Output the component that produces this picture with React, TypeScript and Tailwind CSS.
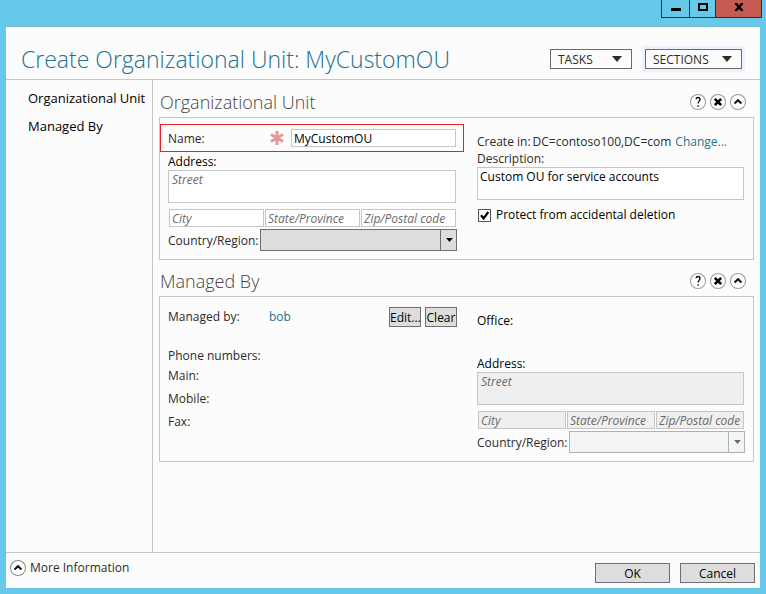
import React, { useState } from "react";

const FIELD =
  "block min-w-0 rounded-none border border-[#c6c6c6] bg-white text-black placeholder:italic placeholder:text-[#6a6a6a] placeholder:opacity-100 outline-none disabled:bg-[#efefef]";
const LINE_FIELD = "h-[18px] pl-0.5 leading-4";
const BUTTON = "h-5 border border-[#707070] bg-[#dddddd] pt-0.5 leading-4 text-black";

function CaretDown({ className }: { className?: string }) {
  return (
    <svg viewBox="0 0 10 6" className={className} fill="currentColor" aria-hidden="true">
      <path d="M0 0h10L5 6z" />
    </svg>
  );
}

function ChevronUp() {
  return (
    <svg viewBox="0 0 16 16" className="size-4" fill="none" stroke="#111" strokeWidth="2" aria-hidden="true">
      <path d="M4.5 9.5 8 6.2l3.5 3.3" />
    </svg>
  );
}

function RoundButton({ label, children }: { label: string; children: React.ReactNode }) {
  return (
    <button
      type="button"
      aria-label={label}
      className="flex size-4 shrink-0 items-center justify-center rounded-full bg-white text-black ring-1 ring-inset ring-[#9a9a9a]"
    >
      {children}
    </button>
  );
}

function MenuButton({ children, focused }: { children: string; focused?: boolean }) {
  return (
    <button
      type="button"
      className={`flex h-5 items-center justify-between border border-[#6a6a6a] bg-[#fcfcfc] px-[7px] text-[#2b2b2b] ${
        focused ? "w-[97px] ring-3 ring-[#edf2ff]" : "w-[82px]"
      }`}
    >
      <span className="pt-0.5 leading-4">{children}</span>
      <CaretDown className="mr-0.5 h-1.5 w-2.5" />
    </button>
  );
}

function Section({ title, children }: { title: string; children: React.ReactNode }) {
  return (
    <section className="pt-[7px]">
      <div className="flex h-[29px] items-center justify-between pr-2 pl-px">
        <h2 className="text-[18px] leading-[29px] font-light text-[#444]">{title}</h2>
        <div className="flex gap-1 pb-0.5">
          <RoundButton label="Help">
            <svg viewBox="0 0 16 16" className="size-4" fill="none" stroke="currentColor" strokeWidth="1.3" aria-hidden="true">
              <path d="M6 5C6.200 4 7 3.500 8 3.500c1.200 0 2 .8 2 1.900C10 7 8.100 7.300 8.100 9.600M8.100 11.200v1.500" />
            </svg>
          </RoundButton>
          <RoundButton label="Remove section">
            <svg viewBox="0 0 16 16" className="size-4" fill="none" stroke="currentColor" strokeWidth="2.6" aria-hidden="true">
              <path d="m4.800 4.800 6.400 6.400M11.200 4.800l-6.400 6.400" />
            </svg>
          </RoundButton>
          <RoundButton label="Collapse section">
            <ChevronUp />
          </RoundButton>
        </div>
      </div>
      <div className="grid grid-cols-[304fr_289fr] border border-[#c6c6c6]">{children}</div>
    </section>
  );
}

function AddressFields({ id, disabled }: { id: string; disabled?: boolean }) {
  return (
    <div>
      <label htmlFor={`${id}-street`} className="block pt-0.5 leading-4 text-black">
        Address:
      </label>
      <textarea
        id={`${id}-street`}
        placeholder="Street"
        disabled={disabled}
        className={`${FIELD} h-[33px] w-full resize-none overflow-hidden px-[3px] leading-[18px]`}
      />
      <div className="mt-1.5 flex gap-px pl-px">
        <input aria-label="City" placeholder="City" disabled={disabled} className={`${FIELD} ${LINE_FIELD} w-0 flex-1`} />
        <input
          aria-label="State/Province"
          placeholder="State/Province"
          disabled={disabled}
          className={`${FIELD} ${LINE_FIELD} w-0 flex-1`}
        />
        <input
          aria-label="Zip/Postal code"
          placeholder="Zip/Postal code"
          disabled={disabled}
          className={`${FIELD} ${LINE_FIELD} w-0 flex-1`}
        />
      </div>
      <div className="mt-0.5 -mr-px flex items-center">
        <label htmlFor={`${id}-country`} className="w-[92px] shrink-0 pt-0.5 leading-4 whitespace-nowrap">
          Country/Region:
        </label>
        <div className="relative h-[22px] min-w-0 flex-1">
          <select
            id={`${id}-country`}
            disabled={disabled}
            className="block size-full appearance-none rounded-none border border-[#707070] bg-[#dddddd] px-1 opacity-100 disabled:border-[#adb2b5] disabled:bg-[#f3f4f4]"
          >
            <option value=""></option>
          </select>
          <span
            className={`pointer-events-none absolute inset-y-0 right-0 flex w-[17px] items-center justify-center border-l ${
              disabled ? "border-[#adb2b5] text-[#6a6a6a]" : "border-[#707070] text-black"
            }`}
          >
            <CaretDown className="h-1 w-[7px]" />
          </span>
        </div>
      </div>
    </div>
  );
}

export default function App() {
  const [name, setName] = useState("MyCustomOU");
  const [description, setDescription] = useState("Custom OU for service accounts");
  const [isProtected, setProtected] = useState(true);

  return (
    <div className="flex min-h-screen flex-col bg-[#66c9ea] px-1.5 pb-1.5 font-['Open_Sans','Noto_Sans',sans-serif] text-[12px] leading-[18px] text-[#2b2b2b]">
      <div className="-mr-0.5 flex h-[26px] items-start justify-end">
        <div className="flex h-[18px] divide-x divide-[#26323a] border border-t-0 border-[#26323a] text-black">
          <button type="button" aria-label="Minimize" className="flex w-7 justify-center pt-2">
            <span className="h-[3px] w-2.5 bg-black" />
          </button>
          <button type="button" aria-label="Maximize" className="flex w-[26px] justify-center pt-[3px]">
            <span className="h-2 w-2.5 border-2 border-black" />
          </button>
          <button type="button" aria-label="Close" className="flex w-[45px] justify-center bg-[#c35b52] pt-[3px]">
            <svg viewBox="0 0 10 8" className="h-2 w-2.5" stroke="currentColor" strokeWidth="2.4" aria-hidden="true">
              <path d="m1.500 0 7 8M8.500 0l-7 8" />
            </svg>
          </button>
        </div>
      </div>

      <div className="flex flex-1 flex-col border-t border-[#7fb4c9] bg-[#fcfcfc]">
        <header className="flex h-[53px] items-center justify-between border-b border-[#c6c6c6] pt-3 pr-[18px] pl-[15px]">
          <h1 className="text-[23px] leading-8 font-light whitespace-nowrap text-[#1a7191]">
            Create Organizational Unit: MyCustomOU
          </h1>
          <div className="flex gap-[13px]">
            <MenuButton>TASKS</MenuButton>
            <MenuButton focused>SECTIONS</MenuButton>
          </div>
        </header>

        <div className="flex flex-1">
          <nav className="flex w-[147px] shrink-0 flex-col gap-2.5 border-r border-[#c6c6c6] pt-[9px] pl-[22px] text-[13px] whitespace-nowrap text-black">
            <a href="#organizational-unit">Organizational Unit</a>
            <a href="#managed-by">Managed By</a>
          </nav>

          <main className="min-w-0 flex-1 pt-px pr-1.5 pl-1.5">
            <Section title="Organizational Unit">
              <div className="pt-1.5 pb-2">
                <div className="flex h-7 items-center border border-[#e5202b] pr-[7px] pl-[7px]">
                  <label htmlFor="ou-name" className="flex-1 pt-0.5 leading-4">
                    Name:
                  </label>
                  <svg viewBox="0 0 14 14" className="mr-[7px] size-3.5" stroke="#e39a96" strokeWidth="3" aria-hidden="true">
                    <path d="M7 0v14M.9 3.500l12.200 7M13.100 3.500l-12.200 7" />
                  </svg>
                  <input
                    id="ou-name"
                    required
                    value={name}
                    onChange={(e) => setName(e.target.value)}
                    className={`${FIELD} ${LINE_FIELD} w-[165px]`}
                  />
                </div>
                <div className="pr-2 pl-2">
                  <AddressFields id="ou" />
                </div>
              </div>
              <div className="pt-[15px] pr-[9px] pl-[13px]">
                <div className="flex h-[17px] items-center whitespace-nowrap">
                  <span className="mr-0.5">Create in:</span>
                  <span className="mr-1">DC=contoso100,DC=com</span>
                  <a href="#change" className="text-[#1a7191]">
                    Change...
                  </a>
                </div>
                <label htmlFor="ou-description" className="block h-[17px] leading-[17px]">
                  Description:
                </label>
                <textarea
                  id="ou-description"
                  value={description}
                  onChange={(e) => setDescription(e.target.value)}
                  className={`${FIELD} h-[33px] w-full resize-none overflow-hidden px-0.5 leading-[18px]`}
                />
                <label className="mt-1.5 flex items-center gap-[5px] pl-px text-black">
                  <span className="relative flex size-[13px]">
                    <input
                      type="checkbox"
                      checked={isProtected}
                      onChange={(e) => setProtected(e.target.checked)}
                      className="peer size-[13px] appearance-none border border-[#555] bg-white"
                    />
                    <svg
                      viewBox="0 0 13 13"
                      className="pointer-events-none absolute inset-0 hidden size-[13px] peer-checked:block"
                      fill="none"
                      stroke="#000"
                      strokeWidth="2.2"
                      aria-hidden="true"
                    >
                      <path d="m3 6.200 2.600 3.300L10.300 3" />
                    </svg>
                  </span>
                  Protect from accidental deletion
                </label>
              </div>
            </Section>

            <Section title="Managed By">
              <div className="pt-2.5 pr-[7px] pl-2">
                <div className="flex h-5 items-center">
                  <span className="w-[101px]">Managed by:</span>
                  <a href="#bob" className="flex-1 text-[#1a7191]">
                    bob
                  </a>
                  <div className="flex gap-1">
                    <button type="button" className={`${BUTTON} w-8`}>
                      Edit...
                    </button>
                    <button type="button" className={`${BUTTON} w-8`}>
                      Clear
                    </button>
                  </div>
                </div>
                <h3 className="mt-[19px] leading-5">Phone numbers:</h3>
                <ul className="flex flex-col gap-[3px] leading-5">
                  <li>Main:</li>
                  <li>Mobile:</li>
                  <li>Fax:</li>
                </ul>
              </div>
              <div className="pt-[15px] pr-[9px] pb-2 pl-[13px]">
                <p className="mb-6 text-black">Office:</p>
                <AddressFields id="manager" disabled />
              </div>
            </Section>
          </main>
        </div>

        <footer className="flex h-9 items-start justify-between border-t border-[#c6c6c6] pr-[5px] pl-1">
          <button type="button" className="mt-1.5 flex items-center gap-1">
            <span className="flex size-4 items-center justify-center rounded-full bg-white ring-1 ring-inset ring-[#8a8a8a]">
              <ChevronUp />
            </span>
            More Information
          </button>
          <div className="mt-2.5 flex gap-2.5">
            <button type="button" className={`${BUTTON} w-[75px]`}>
              OK
            </button>
            <button type="button" className={`${BUTTON} w-[75px]`}>
              Cancel
            </button>
          </div>
        </footer>
      </div>
    </div>
  );
}
